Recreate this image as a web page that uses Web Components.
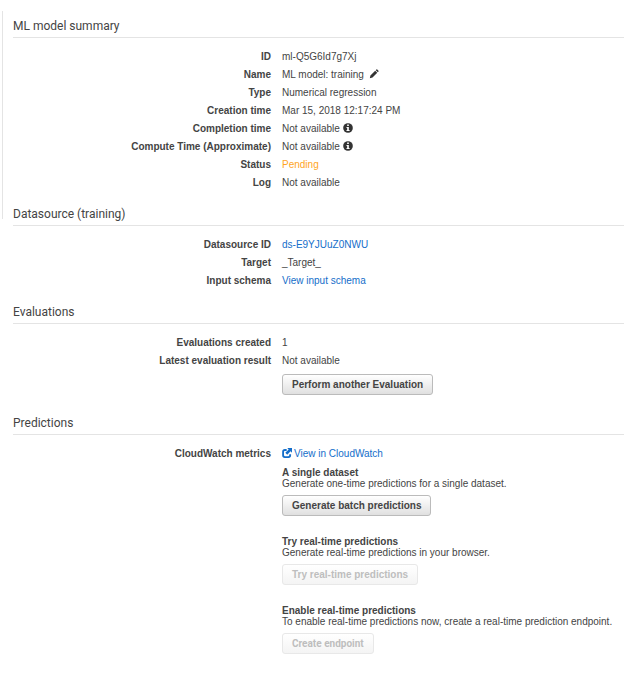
<!DOCTYPE html>
<html lang="en">
<head>
<meta charset="utf-8">
<title>ML model summary</title>
<style>
  body{
    margin: 0;
    background-color: #fff;
    color: #444;
    font: 10px/18px "Liberation Sans", Arial, sans-serif;
  }
</style>
</head>
<body>
<model-page>
  <page-section heading="ML model summary">
    <info-row label="ID">ml-Q5G6Id7g7Xj</info-row>
    <info-row label="Name">ML model: training <page-icon name="pencil"></page-icon></info-row>
    <info-row label="Type">Numerical regression</info-row>
    <info-row label="Creation time">Mar 15, 2018 12:17:24 PM</info-row>
    <info-row label="Completion time">Not available <page-icon name="info"></page-icon></info-row>
    <info-row label="Compute Time (Approximate)">Not available <page-icon name="info"></page-icon></info-row>
    <info-row label="Status" state="pending">Pending</info-row>
    <info-row label="Log">Not available</info-row>
  </page-section>
  <page-section heading="Datasource (training)">
    <info-row label="Datasource ID"><a href="#datasource">ds-E9YJUuZ0NWU</a></info-row>
    <info-row label="Target">_Target_</info-row>
    <info-row label="Input schema"><a href="#schema">View input schema</a></info-row>
  </page-section>
  <page-section heading="Evaluations">
    <info-row label="Evaluations created">1</info-row>
    <info-row label="Latest evaluation result">Not available</info-row>
    <info-row>
      <action-button>Perform another Evaluation</action-button>
    </info-row>
  </page-section>
  <page-section heading="Predictions">
    <info-row label="CloudWatch metrics"><a href="#cloudwatch"><page-icon name="external"></page-icon>View in CloudWatch</a></info-row>
    <info-row>
      <prediction-option heading="A single dataset" text="Generate one-time predictions for a single dataset.">
        <action-button>Generate batch predictions</action-button>
      </prediction-option>
      <prediction-option heading="Try real-time predictions" text="Generate real-time predictions in your browser.">
        <action-button disabled>Try real-time predictions</action-button>
      </prediction-option>
      <prediction-option heading="Enable real-time predictions" text="To enable real-time predictions now, create a real-time prediction endpoint.">
        <action-button disabled face="roboto">Create endpoint</action-button>
      </prediction-option>
    </info-row>
  </page-section>
</model-page>

<script>
class ModelPage extends HTMLElement{
    constructor(){
        super();
        const el = this.attachShadow({mode:'open'})
        el.innerHTML = `
        <style>
        :host{
          display: grid;
          grid-template-columns: 11px minmax(0, 1fr);
          padding: 11px 0 16px 2px;
        }
        .rail{
          width: 1px;
          height: 208px;
          background-color: #e4e4e4;
        }
        main{
          display: flex;
          flex-direction: column;
          gap: 13px;
          padding-top: 6px;
        }
        </style>
        <div class="rail"></div>
        <main><slot></slot></main>`
    }
}
customElements.define('model-page', ModelPage)

class PageSection extends HTMLElement{
    constructor(){
        super();
        const el = this.attachShadow({mode:'open'})
        el.innerHTML = `
        <style>
        :host{
          display: block;
        }
        h2{
          margin: 0 0 10px;
          padding-bottom: 2px;
          border-bottom: 1px solid #e4e4e4;
          font: 400 12px/18px Roboto, sans-serif;
          color: #444;
        }
        </style>
        <section>
            <h2>${this.getAttribute('heading')}</h2>
            <slot></slot>
        </section>`
    }
}
customElements.define('page-section', PageSection)

class InfoRow extends HTMLElement{
    constructor(){
        super();
        const el = this.attachShadow({mode:'open'})
        const label = this.getAttribute('label')
        el.innerHTML = `
        <style>
        :host{
          display: grid;
          grid-template-columns: 258px minmax(0, 1fr);
          column-gap: 11px;
        }
        :host([state="pending"]) .value{
          color: #ffa51e;
        }
        :host(:not([label])) .value{
          padding: 4px 0 6px;
        }
        .label{
          text-align: right;
          font-weight: 700;
        }
        ::slotted(a){
          color: #146eca;
          text-decoration: none;
        }
        </style>
        <div class="label">${label || ''}</div>
        <div class="value"><slot></slot></div>`
    }
}
customElements.define('info-row', InfoRow)

class PredictionOption extends HTMLElement{
    constructor(){
        super();
        const el = this.attachShadow({mode:'open'})
        el.innerHTML = `
        <style>
        :host{
          display: block;
          margin-bottom: 20px;
          line-height: 11px;
        }
        h3, p{
          margin: 0;
          font-size: 10px;
        }
        p{
          margin-bottom: 6px;
        }
        </style>
        <h3>${this.getAttribute('heading')}</h3>
        <p>${this.getAttribute('text')}</p>
        <slot></slot>`
    }
}
customElements.define('prediction-option', PredictionOption)

class ActionButton extends HTMLElement{
    constructor(){
        super();
        const el = this.attachShadow({mode:'open'})
        el.innerHTML = `
        <style>
        :host{
          display: flex;
        }
        button{
          height: 21px;
          padding: 0 9px;
          border: 1px solid #bbb;
          border-radius: 3px;
          background-image: linear-gradient(#fff, #e0e0e0);
          color: #444;
          font: 700 10px/18px "Liberation Sans", Arial, sans-serif;
        }
        button:disabled{
          border-color: #e8e8e8;
          background-image: linear-gradient(#fff, #f4f4f4);
          color: #bebebe;
        }
        :host([face="roboto"]) button{
          font-family: Roboto, sans-serif;
        }
        </style>
        <button type="button" ${this.hasAttribute('disabled')?'disabled':''}><slot></slot></button>`
    }
}
customElements.define('action-button', ActionButton)

const icons = {
    pencil: `<path fill="#333" d="M1 11l.7-3.2L7.4 2.1l2.5 2.5-5.7 5.7zM8.1 1.4l.8-.8q.5-.4 1 0l1.5 1.5q.4.5 0 1l-.8.8z"/>`,
    info: `<circle cx="6" cy="6" r="5.8" fill="#333"/><path fill="#fff" d="M5 1.900h2v1.700H5zM4.200 4.700H7v3.600h.9v1.300H4.200V8.300H5V6h-.8z"/>`,
    external: `<path fill="none" stroke="#146eca" stroke-width="2.2" d="M5.600 2.400H3.400Q1.300 2.400 1.300 4.500v4.300q0 2.100 2.100 2.100h4.300q2.100 0 2.100-2.100V7.600"/><path fill="#146eca" d="M6.300 0H12v5.700L10.300 4 6.300 8 4 5.700 8 1.700z"/>`
}

class PageIcon extends HTMLElement{
    constructor(){
        super();
        const el = this.attachShadow({mode:'open'})
        const name = this.getAttribute('name')
        el.innerHTML = `
        <style>
        :host{
          display: inline-block;
          width: 10px;
          height: 10px;
          vertical-align: -1px;
        }
        :host([name="pencil"]){
          margin-left: 2px;
        }
        :host([name="external"]){
          margin-right: 2px;
        }
        svg{
          display: block;
          width: 100%;
          height: 100%;
          overflow: visible;
        }
        </style>
        <svg viewBox="0 0 12 12" aria-hidden="true">${icons[name]}</svg>`
    }
}
customElements.define('page-icon', PageIcon)
</script>
</body>
</html>
